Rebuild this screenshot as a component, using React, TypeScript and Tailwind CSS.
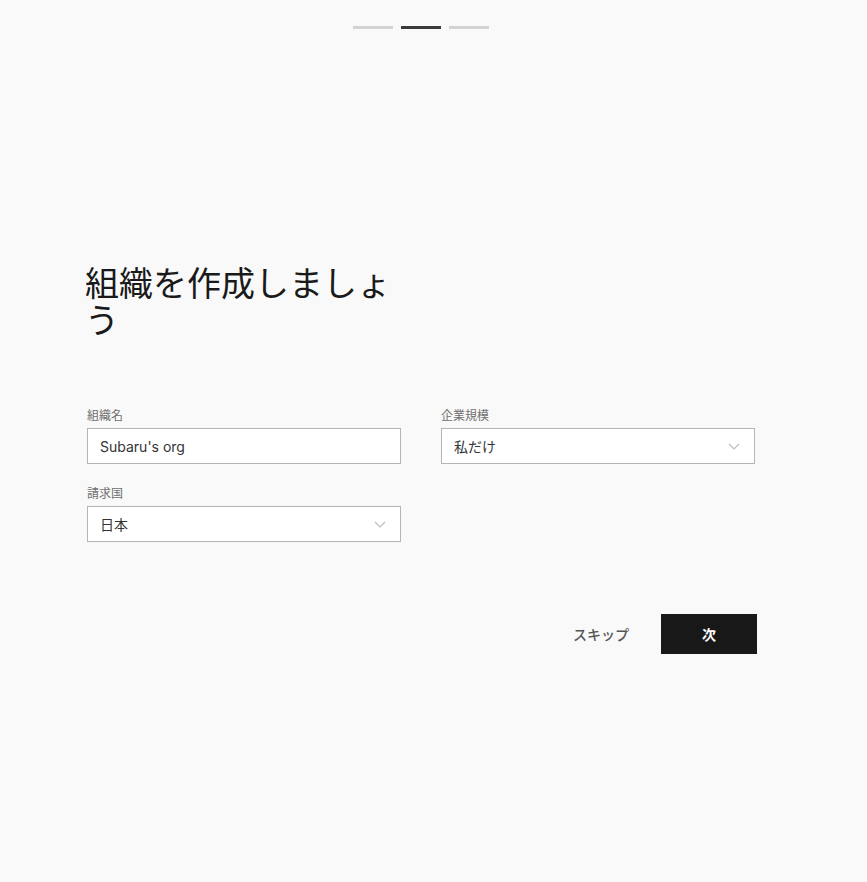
import { useState } from "react";

const font = "font-['Inter','Noto_Sans_CJK_JP',sans-serif]";

function Chevron() {
  return (
    <svg
      width="12"
      height="7"
      viewBox="0 0 12 7"
      fill="none"
      className="shrink-0"
    >
      <path d="M1 1l5 5 5-5" stroke="#bdbdbd" strokeWidth="1.2" />
    </svg>
  );
}

function Field({ label, children }: { label: string; children: React.ReactNode }) {
  return (
    <div className="flex flex-col">
      <label className="mb-[4px] text-[12px] leading-[16px] text-[#6f6f6f]">{label}</label>
      {children}
    </div>
  );
}

function SelectBox({ value }: { value: string }) {
  return (
    <div className="flex h-9 items-center justify-between border border-[#b4b4b4] bg-white pl-[12px] pr-[14px] text-[14px] text-[#333]">
      <span>{value}</span>
      <Chevron />
    </div>
  );
}

export default function App() {
  const [orgName, setOrgName] = useState("Subaru's org");

  return (
    <main className={`min-h-screen bg-[#f9f9f9] ${font}`}>
      <div className="ml-[87px] w-[670px] pt-[26px]">
        <div className="flex justify-center gap-2 pr-[2px]">
          <span className="h-[3px] w-10 bg-[#d2d2d2]" />
          <span className="h-[3px] w-10 bg-[#3b3b3b]" />
          <span className="h-[3px] w-10 bg-[#d2d2d2]" />
        </div>

        <h1 className="-ml-[2px] mt-[236px] w-[330px] text-[34px] leading-[37px] font-normal text-[#1a1a1a]">
          組織を作成しましょう
        </h1>

        <div className="mt-[69px] grid w-[668px] grid-cols-2 gap-x-10 gap-y-[22px]">
          <Field label="組織名">
            <input
              value={orgName}
              onChange={(e) => setOrgName(e.target.value)}
              className="h-9 border border-[#b4b4b4] bg-white px-[12px] text-[14px] text-[#333] outline-none"
            />
          </Field>
          <Field label="企業規模">
            <SelectBox value="私だけ" />
          </Field>
          <Field label="請求国">
            <SelectBox value="日本" />
          </Field>
        </div>

        <div className="mt-[72px] flex items-center justify-end">
          <button type="button" className="mr-[32px] text-[14px] font-medium text-[#555]">
            スキップ
          </button>
          <button
            type="button"
            className="h-10 w-24 bg-[#181818] text-[14px] font-bold text-white"
          >
            次
          </button>
        </div>
      </div>
    </main>
  );
}
